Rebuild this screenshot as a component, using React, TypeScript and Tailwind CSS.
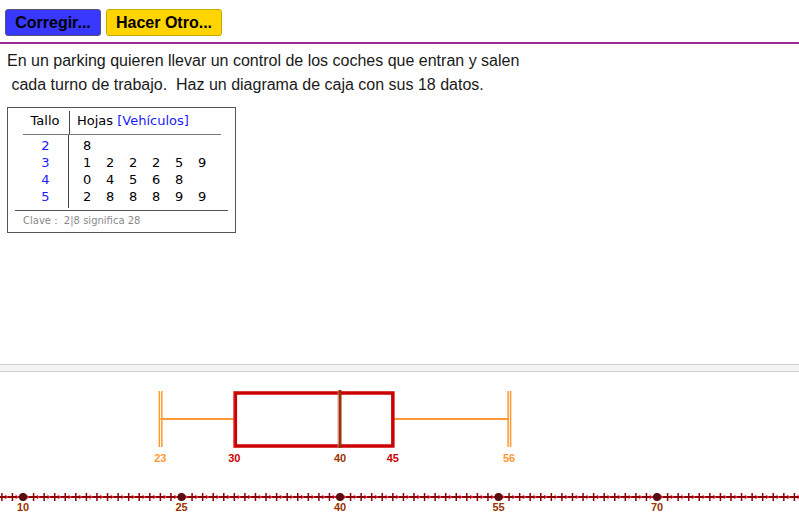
const stems = [
  { s: "2", leaves: ["8"] },
  { s: "3", leaves: ["1", "2", "2", "2", "5", "9"] },
  { s: "4", leaves: ["0", "4", "5", "6", "8"] },
  { s: "5", leaves: ["2", "8", "8", "8", "9", "9"] },
];

const px = (v: number) => 23 + (v - 10) * 10.567;

function NumberLine() {
  const ticks = [];
  for (let u = 2; u <= 85; u++) ticks.push(u);
  return (
    <g>
      <line x1={0} y1={125} x2={799} y2={125} stroke="#8b0000" strokeWidth={2} />
      {ticks.map((u) => (
        <g key={u}>
          <line x1={px(u)} y1={121} x2={px(u)} y2={129} stroke="#8b0000" strokeWidth={1.5} />
          <path d={`M${px(u) + 3} 123 L${px(u) + 6} 125 L${px(u) + 3} 127`} stroke="#ff3366" strokeWidth={1} fill="none" />
        </g>
      ))}
      {[10, 25, 40, 55, 70].map((v) => (
        <g key={v}>
          <circle cx={px(v)} cy={125} r={4} fill="#5a0f0f" />
          <text x={px(v)} y={139} textAnchor="middle" fontSize={11} fontWeight="bold" fill="#993300" fontFamily="Liberation Sans, Arial, sans-serif">
            {v}
          </text>
        </g>
      ))}
    </g>
  );
}

function BoxPlot() {
  const f = "Liberation Sans, Arial, sans-serif";
  return (
    <g>
      <line x1={px(23)} y1={47} x2={px(30)} y2={47} stroke="#ff9933" strokeWidth={2} />
      <line x1={px(45)} y1={47} x2={px(56)} y2={47} stroke="#ff9933" strokeWidth={2} />
      <line x1={px(23) - 1} y1={19} x2={px(23) - 1} y2={75} stroke="#ff9933" strokeWidth={1.5} />
      <line x1={px(23) + 1.5} y1={19} x2={px(23) + 1.5} y2={75} stroke="#ff9933" strokeWidth={1.5} />
      <line x1={px(56) - 1} y1={19} x2={px(56) - 1} y2={75} stroke="#ff9933" strokeWidth={1.5} />
      <line x1={px(56) + 1.5} y1={19} x2={px(56) + 1.5} y2={75} stroke="#ff9933" strokeWidth={1.5} />
      <rect x={px(30) + 1} y={21} width={px(45) - px(30) - 1} height={53} fill="none" stroke="#cc0000" strokeWidth={3.5} />
      <line x1={px(30) - 0.5} y1={19} x2={px(30) - 0.5} y2={76} stroke="#e05050" strokeWidth={1} />
      <line x1={px(40)} y1={18} x2={px(40)} y2={76} stroke="#993300" strokeWidth={3} />
      <line x1={px(40) - 2} y1={18} x2={px(40) - 2} y2={76} stroke="#e08080" strokeWidth={0.8} />
      <text x={px(23)} y={90} textAnchor="middle" fontSize={11} fontWeight="bold" fill="#ff9933" fontFamily={f}>23</text>
      <text x={px(30)} y={90} textAnchor="middle" fontSize={11} fontWeight="bold" fill="#cc0000" fontFamily={f}>30</text>
      <text x={px(40)} y={90} textAnchor="middle" fontSize={11} fontWeight="bold" fill="#993300" fontFamily={f}>40</text>
      <text x={px(45)} y={90} textAnchor="middle" fontSize={11} fontWeight="bold" fill="#cc0000" fontFamily={f}>45</text>
      <text x={px(56)} y={90} textAnchor="middle" fontSize={11} fontWeight="bold" fill="#ff9933" fontFamily={f}>56</text>
    </g>
  );
}

export default function App() {
  return (
    <main className="h-[521px] w-[799px] overflow-hidden bg-white font-['Liberation_Sans',Arial,sans-serif] text-black">
      <div className="flex h-[42px] items-start gap-[5px] px-[5px] pt-[9px]">
        <button className="h-[27px] w-[96px] rounded-[3px] border border-[#555577] bg-[#3838ff] text-[16px] font-bold">
          Corregir...
        </button>
        <button className="h-[27px] w-[116px] rounded-[3px] border border-[#c9a800] bg-[#ffd400] text-[16px] font-bold">
          Hacer Otro...
        </button>
      </div>
      <div className="h-[2px] bg-[#9a2a94]" />
      <div className="whitespace-pre px-[7px] pt-[5px] text-[16px] leading-[24px] text-[#1a1a1a]">
        <div>En un parking quieren llevar un control de los coches que entran y salen</div>
        <div> cada turno de trabajo.  Haz un diagrama de caja con sus 18 datos.</div>
      </div>
      <div className="ml-[7px] mt-[10px] h-[126px] w-[229px] border border-[#555] font-['DejaVu_Sans',sans-serif] text-[13px]">
        <div className="flex h-[26px] items-end pl-[15px]">
          <div className="flex w-[47px] items-center justify-center border-r border-[#444] pb-[4px] pr-[2px]">
            Tallo
          </div>
          <div className="w-[151px] pb-[4px] pl-[7px]">
            Hojas <span className="text-[#1a1aff]">[Vehículos]</span>
          </div>
        </div>
        <div className="ml-[15px] flex w-[198px] border-t border-[#777]">
          <div className="flex w-[47px] flex-col items-center border-r border-[#444] pb-[3px] pt-[2px] leading-[17px] text-[#1a1aff]">
            {stems.map((r) => (
              <div key={r.s}>{r.s}</div>
            ))}
          </div>
          <div className="flex flex-col pl-[14px] pt-[2px] leading-[17px]">
            {stems.map((r) => (
              <div key={r.s} className="flex">
                {r.leaves.map((l, i) => (
                  <span key={i} className="w-[23px]">{l}</span>
                ))}
              </div>
            ))}
          </div>
        </div>
        <div className="mx-[7px] mt-[2px] border-t border-[#555] pl-[8px] pt-[2px] text-[10px] text-[#8a8a8a]">
          Clave :&nbsp; 2|8 significa 28
        </div>
      </div>
      <div className="mt-[131px] h-[8px] border-y border-[#d2d2d2] bg-[#f4f4f4]" />
      <svg width={799} height={151} className="block">
        <BoxPlot />
        <NumberLine />
      </svg>
    </main>
  );
}
